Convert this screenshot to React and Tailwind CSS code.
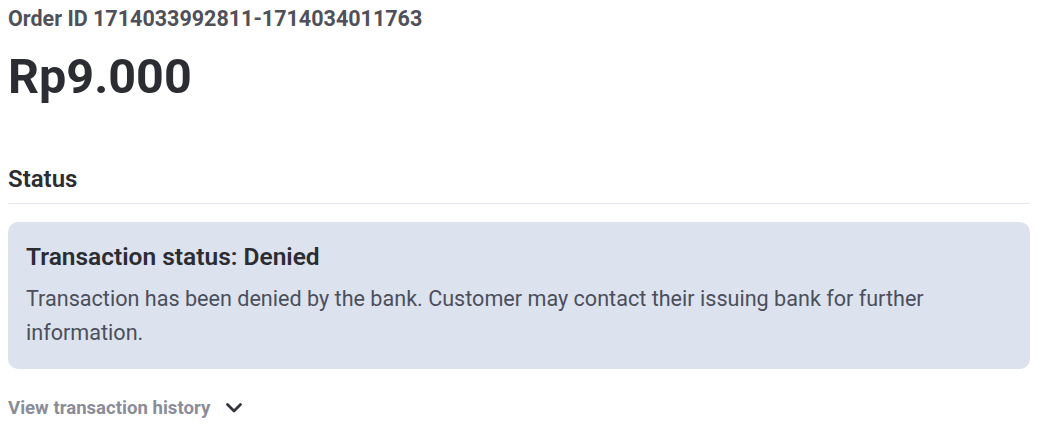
import React from "react";

const App = () => {
  return (
    <div className="w-full min-h-[435px] bg-white pl-2 pr-[15px] font-['Roboto',sans-serif]">
      <div className="pt-[6px] text-[21.5px] font-bold leading-[26px] text-[#4f5059]">
        Order ID 1714033992811-1714034011763
      </div>
      <div className="mt-[17px] text-[48.5px] font-bold leading-[56px] text-[#2c2d33]">Rp9.000</div>

      <div className="mt-[59px] border-b border-[#e3e6ec] pb-[9px] text-[24px] font-semibold leading-[30px] text-[#2c2d33]">
        Status
      </div>

      <div className="mt-[18px] rounded-[10px] bg-[#dde3ee] px-[18px] pt-[20px] pb-[19px]">
        <div className="text-[24.5px] font-semibold leading-[30px] text-[#2c2d33]">Transaction status: Denied</div>
        <p className="mt-[10px] text-[21.6px] leading-[34px] text-[#4b4f5c]">
          Transaction has been denied by the bank. Customer may contact their issuing bank for further information.
        </p>
      </div>

      <button className="mt-[27px] flex items-center gap-[15px] text-[18.6px] font-bold leading-[24px] text-[#8a8d99]">
        View transaction history
        <svg width="18" height="12" viewBox="0 0 18 12" fill="none" stroke="#33353c" strokeWidth="2.8" strokeLinecap="round" strokeLinejoin="round">
          <path d="M2.5 2.5l6.5 6.5 6.5-6.5" />
        </svg>
      </button>
    </div>
  );
};

export default App;
